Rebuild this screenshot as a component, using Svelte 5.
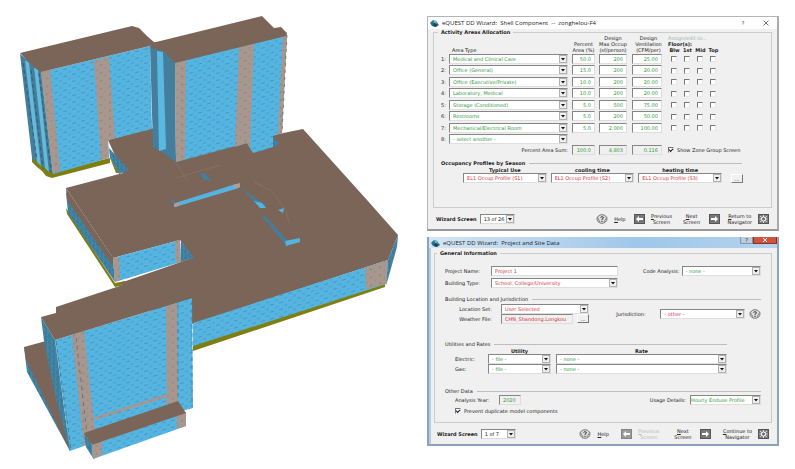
<script>
	const areas = [
		{ type: 'Medical and Clinical Care', percent: '50.0', occup: '200', vent: '25.00' },
		{ type: 'Office (General)', percent: '15.0', occup: '200', vent: '20.00' },
		{ type: 'Office (Executive/Private)', percent: '10.0', occup: '200', vent: '20.00' },
		{ type: 'Laboratory, Medical', percent: '10.0', occup: '200', vent: '20.00' },
		{ type: 'Storage (Conditioned)', percent: '5.0', occup: '500', vent: '75.00' },
		{ type: 'Restrooms', percent: '5.0', occup: '200', vent: '50.00' },
		{ type: 'Mechanical/Electrical Room', percent: '5.0', occup: '2,000', vent: '100.00' },
		{ type: '- select another -' }
	];

	const floors = ['Blw', '1st', 'Mid', 'Top'];

	const seasons = [
		{ id: 'typical', label: 'Typical Use', profile: 'EL1 Occup Profile (S1)' },
		{ id: 'cooling', label: 'cooling time', profile: 'EL1 Occup Profile (S2)' },
		{ id: 'heating', label: 'heating time', profile: 'EL1 Occup Profile (S3)' }
	];
</script>

{#snippet combo(id, value, tone = 'green', label = undefined)}
	<span class="combo">
		<select {id} class={tone} aria-label={label}>
			<option>{value}</option>
		</select>
		<svg viewBox="0 0 8 8" aria-hidden="true">
			<rect x="0.5" y="0.5" width="7" height="7" fill="#f0f0f0" stroke="#b0b0b0" />
			<path d="M2 3h4L4 5.500z" fill="#111" />
		</svg>
	</span>
{/snippet}

{#snippet appIcon()}
	<svg class="app-icon" viewBox="0 0 9 8" aria-hidden="true">
		<path d="M0 4 3 1l3 1 3 4-3 2-4-1z" fill="#2b6f86" />
		<path d="M3 1 6 2 7 5 4 4z" fill="#5fb9cf" />
		<path d="M4 4 7 5 6 8 3 7z" fill="#174654" />
	</svg>
{/snippet}

{#snippet helpIcon()}
	<svg class="help-icon" viewBox="0 0 12 10" aria-hidden="true">
		<ellipse cx="6" cy="5" rx="5" ry="4.300" fill="#ddd" stroke="#777" />
		<path d="M1 3 4 8M8 8l3-5" stroke="#888" fill="none" />
		<path d="M4.500 3.500Q6 1.800 7.400 3.300 7.600 4.500 6 5.300V6.200M6 7v1" stroke="#333" fill="none" />
	</svg>
{/snippet}

{#snippet arrowIcon(back)}
	<svg class="tool-icon" viewBox="0 0 11 10" aria-hidden="true">
		<rect x="0.500" y="0.500" width="10" height="9" fill="#777" stroke="#555" />
		{#if back}
			<path d="M2 5 5 2v2h4v2H5v2z" fill="#fff" />
		{:else}
			<path d="M9 5 6 2v2H2v2h4v2z" fill="#fff" />
		{/if}
	</svg>
{/snippet}

{#snippet navigatorIcon()}
	<svg class="tool-icon" viewBox="0 0 11 10" aria-hidden="true">
		<rect x="0.500" y="0.500" width="10" height="9" fill="#777" stroke="#555" />
		<path d="M2 2l7 6M9 2 2 8M5.500 1v8M1.500 5h8" stroke="#ddd" />
		<circle cx="5.500" cy="5" r="2" fill="#666" stroke="#fff" />
	</svg>
{/snippet}

{#snippet footer(id, screen, atStart, finish)}
	<footer>
		<label for={id}>Wizard Screen</label>
		<span class="screen">{@render combo(id, screen, 'dark')}</span>
		<button class="tool help">{@render helpIcon()}<span><u>H</u>elp</span></button>
		<button class="tool" disabled={atStart}>
			{@render arrowIcon(true)}<span><u>P</u>revious<br />Screen</span>
		</button>
		<button class="tool"><span><u>N</u>ext<br />Screen</span>{@render arrowIcon(false)}</button>
		<button class="tool">
			<span><u>{finish[0]}</u>{finish.slice(1)} to<br />Navigator</span>{@render navigatorIcon()}
		</button>
	</footer>
{/snippet}

<main>
	<svg class="model" viewBox="0 0 424 469" role="img" aria-label="3D building model">
		<defs>
			<pattern id="glass" width="9" height="7" patternUnits="userSpaceOnUse" patternTransform="skewY(-14)">
				<rect width="9" height="7" fill="#55b4e0" />
				<path d="M0 1.500h3M5 5h3" stroke="#3f8fb2" stroke-width="0.600" />
				<path d="M3 1v1" stroke="#44697a" stroke-width="0.600" />
			</pattern>
			<pattern id="shade" width="4" height="6" patternUnits="userSpaceOnUse" patternTransform="skewY(40)">
				<rect width="4" height="6" fill="#4487a7" />
				<path d="M0 1h3M1 4h2" stroke="#2f6683" stroke-width="0.800" />
			</pattern>
			<pattern id="panel" width="9" height="8" patternUnits="userSpaceOnUse" patternTransform="skewY(-14)">
				<rect width="9" height="8" fill="#a7978f" />
				<path d="M1 2h2M6 6h1" stroke="#71645f" stroke-width="0.600" />
			</pattern>
		</defs>

		<!-- podium -->
		<path class="base" d="M66 208 115 283 125 281V285L115 287 67 214z" />
		<path class="base" d="M193 345 385 283V287L193 351z" />
		<path class="roof" d="M108 140 152 128 176 155 303 129 367 200 398 235 388 260 193 324 150 310 123 283 193 258 180 240 113 258 66 188 123 173z" />
		<path fill="url(#shade)" d="M66 192 113 258 115 282 68 213z" />
		<path class="roof" d="M66 188 113 258V266L67 200z" />
		<path fill="url(#shade)" d="M109 148 129 170 119 174 110 158z" />
		<path fill="url(#glass)" d="M113 258 180 240 181 262 115 282z" />
		<path fill="url(#panel)" d="M113 258 119 257 120 280 115 282zM175 241 180 240 181 262 176 263z" />
		<path fill="url(#shade)" d="M181 241 194 258 181 262z" />
		<path class="roof" d="M120 283 193 258 210 290 193 324 150 300z" />
		<path fill="url(#glass)" d="M193 323 388 260 386 284 193 346z" />
		<path fill="url(#panel)" d="M365 268 388 260 386 284 366 289z" />
		<path fill="url(#shade)" d="M398 235 388 260 386 286 397 247z" />

		<!-- courtyard -->
		<path fill="#55b4df" d="M175 203 236 184 240 185 239 188 175 207z" />
		<path fill="#b39b96" d="M174 203h5v3l-5 1zM233 185l7-2v4l-6 1z" />
		<path class="shade" d="M240 186 251 195 266 205 263 209 255 203 252 199 249 196zM261 215 266 217 287 240 285 244zM168 197 175 202 174 205zM200 173 206 174 211 181 204 180z" />
		<path fill="#55b4df" d="M254 201 262 203 266 208 260 208zM285 241 300 238V242L286 246zM278 210 284 208 283 213z" />
		<path d="M175 162 187 180M176 178 220 165M254 182l18 9 14 20 3 12" fill="none" stroke="#8c776b" stroke-width="0.600" />

		<!-- west tower -->
		<path class="base" d="M32 156 52 172 110 158V163L52 178 46 176 42 171 37 167 32 162z" />
		<path class="base" d="M110 158 119 173 116 173z" />
		<path class="shade" d="M20 54 41 70 53 174 32 158z" />
		<path fill="#66b9db" d="M25 60 29 63 41 166 37 162zM34 67 38 70 49 172 45 168z" />
		<path d="M23 63 37 160M31 70 43 169M39 73 51 172" stroke="#2b5366" stroke-width="0.800" stroke-dasharray="4 3" />
		<path fill="url(#glass)" d="M41 72 150 46 152 129 108 140 109 158 53 174z" />
		<path fill="url(#panel)" d="M41 72 50 70 60 170 53 174zM94 61 109 57 115 138 108 140 109 158 101 160z" />
		<path class="roof" d="M20 53 132 26 139 28 147 36 155 43 150 46 41 72 35 68z" />

		<!-- east tower -->
		<path class="shade" d="M150 46 155 42 175 62 176 162 159 150 153 147z" />
		<path fill="#5bb9e1" d="M157 51 163 52 166 149 159 151z" />
		<path fill="url(#glass)" d="M175 62 287 34 282 133 273 136V147L253 153 247 143 176 162z" />
		<path fill="url(#panel)" d="M175 62 186 59 185 159 176 162zM239 47 254 43 250 148 247 143 235 147zM283 35 287 34 282 133 278 134z" />
		<path class="shade" d="M273 137 280 144 273 147z" />
		<path d="M287 35 282 133" stroke="#665a54" stroke-width="0.700" stroke-dasharray="3 4" />
		<path class="roof" d="M152 43 262 16 274 28 281 27 287 33 286 36 175 63 163 51 151 48z" />

		<!-- south tower -->
		<path fill="url(#shade)" d="M24 347 70 436V451L27 372z" />
		<path class="roof" d="M24 347 46 341 70 451 26 360z" />
		<path fill="url(#shade)" d="M41 317 55 340 70 451 55 395 44 341z" />
		<path fill="url(#glass)" d="M55 340 192 298 193 408 178 412 70 451z" />
		<path fill="url(#panel)" d="M72 335 84 331 95 432 84 446zM166 306 177 303 178 404 167 407zM95 417 167 394V397L95 420z" />
		<path d="M56 341 71 449M76 338 87 434M178 305V400M192 301v106" stroke="#456b7b" stroke-width="0.700" stroke-dasharray="4 4" />
		<path class="roof" d="M41 317 56 313V307L150 276 173 272 192 298 55 340z" />
		<path fill="url(#shade)" d="M84 433 92 445 93 458 86 447z" />
		<path fill="url(#glass)" d="M92 445 186 412V426L93 459z" />
		<path fill="url(#panel)" d="M92 445 102 441V455L93 459zM177 415 186 412V426L177 429z" />
		<path class="roof" d="M84 433 178 401 186 413 92 445z" />
	</svg>

	<div class="dialogs">
		<section class="dialog">
			<header>
				{@render appIcon()}
				<h2>eQUEST DD Wizard:&nbsp; Shell Component &nbsp;--&nbsp; zonghelou-F4</h2>
				<button aria-label="Help">?</button>
				<button aria-label="Close">
					<svg viewBox="0 0 6 6"><path d="M0.500 0.500l5 5M5.500 0.500l-5 5" stroke="#333" stroke-width="0.700" /></svg>
				</button>
			</header>

			<fieldset class="group allocation">
				<legend>Activity Areas Allocation</legend>
				<table>
					<colgroup>
						<col class="c-num" />
						<col />
						<col class="c-percent" />
						<col class="c-occup" />
						<col class="c-vent" />
						{#each floors as floor (floor)}
							<col class="c-floor" />
						{/each}
						<col class="c-rest" />
					</colgroup>
					<thead>
						<tr>
							<th rowspan="2"></th>
							<th rowspan="2" class="area">Area Type</th>
							<th rowspan="2">Percent<br />Area (%)</th>
							<th rowspan="2">Design<br />Max Occup<br />(sf/person)</th>
							<th rowspan="2">Design<br />Ventilation<br />(CFM/per)</th>
							<th colspan="5" class="floors"><i>Assign/edit to...</i><br /><b>Floor(s):</b></th>
						</tr>
						<tr>
							{#each floors as floor (floor)}
								<th><b>{floor}</b></th>
							{/each}
							<th></th>
						</tr>
					</thead>
					<tbody>
						{#each areas as area, i (area.type)}
							<tr>
								<td><label for="area-{i}">{i + 1}:</label></td>
								<td>{@render combo(`area-${i}`, area.type)}</td>
								{#if area.percent}
									<td><input value={area.percent} aria-label="Percent area" /></td>
									<td><input value={area.occup} aria-label="Design max occupancy" /></td>
									<td class="vent"><input value={area.vent} aria-label="Design ventilation" /></td>
									{#each floors as floor (floor)}
										<td class="tick"><input type="checkbox" aria-label={floor} /></td>
									{/each}
								{/if}
							</tr>
						{/each}
					</tbody>
					<tfoot>
						<tr>
							<td colspan="2" class="sum">Percent Area Sum:</td>
							<td><input readonly value="100.0" aria-label="Percent area sum" /></td>
							<td><input readonly value="4,803" aria-label="Total occupancy" /></td>
							<td class="vent"><input readonly value="0.116" aria-label="Total ventilation" /></td>
							<td colspan="5" class="zone">
								<label class="check"><input type="checkbox" checked />Show Zone Group Screen</label>
							</td>
						</tr>
					</tfoot>
				</table>

				<fieldset class="section">
					<legend>Occupancy Profiles by Season</legend>
					<div class="seasons">
						{#each seasons as season (season.id)}
							<div class="season">
								<label for={season.id}>{season.label}</label>
								{@render combo(season.id, season.profile, 'red')}
							</div>
						{/each}
						<button class="more" aria-label="More profiles">...</button>
					</div>
				</fieldset>
			</fieldset>

			{@render footer('screen-shell', '13 of 26', false, 'Return')}
		</section>

		<section class="dialog aero">
			<header>
				{@render appIcon()}
				<h2>eQUEST DD Wizard:&nbsp; Project and Site Data</h2>
				<div class="caption">
					<button aria-label="Help">?</button>
					<button class="close" aria-label="Close">
						<svg viewBox="0 0 6 6"><path d="M1 1l4 4M5 1l-4 4" stroke="#fff" /></svg>
					</button>
				</div>
			</header>

			<fieldset class="group general">
				<legend>General Information</legend>
				<div class="project">
					<label for="project-name">Project Name:</label>
					<input id="project-name" class="red" value="Project 1" />
					<label for="code" class="end">Code Analysis:</label>
					{@render combo('code', '- none -')}
					<label for="building">Building Type:</label>
					{@render combo('building', 'School, College/University', 'red')}
				</div>

				<fieldset class="section location">
					<legend>Building Location and Jurisdiction</legend>
					<div class="place">
						<label for="location" class="end">Location Set:</label>
						{@render combo('location', 'User Selected', 'red')}
						<div class="jurisdiction">
							<label for="jurisdiction">Jurisdiction:</label>
							{@render combo('jurisdiction', '- other -', 'red')}
							<button class="plain" aria-label="Jurisdiction help">{@render helpIcon()}</button>
						</div>
						<label for="weather" class="end">Weather File:</label>
						<div class="file">
							<input id="weather" class="red" readonly value="CHN_Shandong.Longkou" />
							<button class="more" aria-label="Browse weather files">...</button>
						</div>
					</div>
				</fieldset>

				<fieldset class="section utilities">
					<legend>Utilities and Rates</legend>
					<div class="rates">
						<span></span>
						<b>Utility</b>
						<b>Rate</b>
						<label for="electric">Electric:</label>
						{@render combo('electric', '- file -')}
						{@render combo('electric-rate', '- none -', 'green', 'Electric rate')}
						<label for="gas">Gas:</label>
						{@render combo('gas', '- file -')}
						{@render combo('gas-rate', '- none -', 'green', 'Gas rate')}
					</div>
				</fieldset>

				<fieldset class="section other">
					<legend>Other Data</legend>
					<div class="usage">
						<label for="year">Analysis Year:</label>
						<input id="year" readonly value="2020" />
						<label for="usage" class="end">Usage Details:</label>
						{@render combo('usage', 'Hourly Enduse Profile')}
					</div>
					<label class="check"><input type="checkbox" checked />Prevent duplicate model components</label>
				</fieldset>
			</fieldset>

			{@render footer('screen-project', '1 of 7', true, 'Continue')}
		</section>
	</div>
</main>

<style>
	:global(body) {
		margin: 0;
		background: #fff;
	}

	main {
		display: grid;
		grid-template-columns: minmax(0, 424fr) minmax(0, 352fr);
		column-gap: 3px;
		align-items: start;
		padding-right: 16px;
		font: 5px/6px 'DejaVu Sans', sans-serif;
		color: #222;
	}

	.model {
		width: 100%;
		height: auto;
		display: block;
	}

	.roof {
		fill: #7b6558;
	}

	.base {
		fill: #7f7e12;
	}

	.shade {
		fill: #437f9d;
	}

	.dialogs {
		display: flex;
		flex-direction: column;
		gap: 6px;
		padding-top: 16px;
	}

	.dialog {
		box-sizing: border-box;
		background: #f0f0f0;
		border: 1px solid #b4b4b4;
		border-right: 2px solid #aaa;
		border-bottom: 2px solid #999;
	}

	header {
		display: flex;
		align-items: center;
		gap: 3px;
		height: 12px;
		padding: 0 7px 0 2px;
		background: #fff;
	}

	h2 {
		flex: 1;
		margin: 0;
		font: 6px/8px 'Open Sans', sans-serif;
		white-space: nowrap;
	}

	button,
	input,
	select {
		box-sizing: border-box;
		margin: 0;
		font: inherit;
		color: inherit;
	}

	header button {
		width: 8px;
		padding: 0;
		border: 0;
		background: none;
	}

	header button + button {
		margin-left: 12px;
	}

	header button svg {
		display: block;
		width: 6px;
		height: 6px;
		margin: 0 auto;
	}

	.app-icon {
		width: 9px;
		height: 8px;
	}

	fieldset {
		min-width: 0;
		margin: 0;
		padding: 0;
		border: 0;
	}

	.group {
		margin: 0 5px;
		border: 1px solid #cbcbcb;
	}

	.group > legend {
		padding: 0 3px;
		font-weight: bold;
	}

	.section {
		border-top: 1px solid #bdbdbd;
	}

	.section > legend {
		padding: 0 4px 0 0;
		font-weight: bold;
	}

	table {
		width: 100%;
		height: 120px;
		table-layout: fixed;
		border-collapse: collapse;
	}

	.c-num {
		width: 8px;
	}

	.c-percent {
		width: 27px;
	}

	.c-occup {
		width: 32px;
	}

	.c-vent {
		width: 39px;
	}

	.c-floor {
		width: 13px;
	}

	.c-rest {
		width: 44px;
	}

	thead tr {
		height: 6px;
	}

	th {
		padding: 0;
		font-weight: normal;
		vertical-align: bottom;
		white-space: nowrap;
	}

	th.area {
		padding-left: 3px;
		text-align: left;
	}

	th.floors {
		text-align: left;
	}

	th i {
		font-style: normal;
		color: #9bb79b;
	}

	td {
		padding: 0 2px;
		vertical-align: middle;
	}

	td:first-child,
	td.tick {
		padding: 0;
	}

	td:nth-child(2) {
		padding: 0;
		padding-right: 2px;
	}

	tfoot td:nth-child(2) {
		padding: 0 2px;
	}

	td.vent {
		padding: 0 6px 0 3px;
	}

	tfoot .sum {
		padding-right: 2px;
		text-align: right;
	}

	tfoot .zone {
		padding: 0;
	}

	td.tick {
		text-align: center;
	}

	input,
	select {
		width: 100%;
		height: 10px;
		padding: 0 3px;
		border: 1px solid;
		border-color: #858585 #dedede #dedede #858585;
		border-radius: 0;
		background: #fff;
		color: #2f9a3c;
	}

	td input {
		display: block;
		text-align: right;
	}

	input[readonly] {
		background: #f0f0f0;
	}

	.combo {
		display: grid;
		min-width: 0;
	}

	.combo select,
	.combo svg {
		grid-area: 1 / 1;
	}

	.combo select {
		appearance: none;
		min-width: 0;
	}

	.combo svg {
		justify-self: end;
		align-self: center;
		width: 8px;
		height: 8px;
		margin-right: 1px;
		pointer-events: none;
	}

	input.red,
	select.red {
		color: #d4343b;
	}

	select.dark {
		color: #222;
	}

	input[type='checkbox'] {
		appearance: none;
		display: inline-block;
		flex: none;
		width: 6px;
		height: 6px;
		padding: 0;
		border-color: #777 #e8e8e8 #e8e8e8 #777;
		vertical-align: middle;
	}

	input[type='checkbox']:checked::after {
		content: '';
		display: block;
		width: 3px;
		height: 2px;
		border: solid #111;
		border-width: 0 0 1px 1px;
		transform: rotate(-45deg);
	}

	.check {
		display: flex;
		align-items: center;
		gap: 3px;
		white-space: nowrap;
	}

	.more {
		width: 12px;
		height: 9px;
		padding: 0;
		border: 1px solid;
		border-color: #fff #777 #777 #fff;
		background: #f0f0f0;
	}

	.allocation {
		padding: 0 7px 24px;
	}

	.allocation > legend {
		margin-left: -3px;
	}

	.allocation .section {
		margin: 5px 22px 0 0;
		padding-top: 1px;
	}

	.seasons {
		display: grid;
		grid-template-columns: repeat(3, minmax(0, 1fr)) 17px;
		column-gap: 4px;
		align-items: end;
		justify-items: stretch;
		margin-right: -1px;
		padding-left: 22px;
	}

	.seasons .more {
		justify-self: end;
	}

	.season {
		text-align: center;
		font-weight: bold;
	}

	.season select {
		font-weight: normal;
	}

	footer {
		display: flex;
		align-items: center;
		gap: 8px;
		height: 21px;
		padding: 0 8px;
		white-space: nowrap;
	}

	footer label {
		font-weight: bold;
		margin-right: -5px;
	}

	.screen {
		width: 35px;
	}

	.tool {
		display: flex;
		align-items: center;
		gap: 6px;
		padding: 0;
		border: 0;
		background: none;
	}

	.tool span {
		min-width: 22px;
	}

	.tool:disabled {
		color: #b8b8b8;
	}

	.tool:disabled svg {
		opacity: 0.7;
	}

	.help {
		margin-left: auto;
	}

	.help span {
		min-width: 0;
	}

	.help-icon {
		display: block;
		width: 12px;
		height: 10px;
	}

	.tool-icon {
		width: 11px;
		height: 10px;
	}

	/* second dialog has the blue window frame */
	.aero {
		border: 1px solid #8ba3bb;
		border-width: 0 2px 2px;
		background: #f0f0f0;
		box-shadow: inset 2px 0 #b9cde2;
	}

	.aero header {
		height: 11px;
		padding-right: 0;
		background: linear-gradient(90deg, #d5e5f4, #9fc7e9 60%, #b4d3ee);
	}

	.aero footer {
		gap: 12px;
	}

	.aero footer label {
		margin-right: -9px;
	}

	.caption {
		display: flex;
		align-self: flex-start;
	}

	.caption button {
		width: 13px;
		height: 7px;
		border: 1px solid #8197ab;
		border-top: 0;
		background: #b9cbdc;
		line-height: 5px;
	}

	.caption .close {
		width: 24px;
		margin: 0;
		border-color: #8d3027;
		background: #d4513c;
	}

	.general {
		margin-top: 2px;
		padding: 10px 10px 8px;
	}

	.general > legend {
		margin-left: -8px;
	}

	.general .section > legend {
		font-weight: normal;
	}

	.end {
		text-align: right;
	}

	.project {
		display: grid;
		grid-template-columns: 46px minmax(0, 8fr) minmax(0, 4fr) minmax(0, 5fr);
		row-gap: 2px;
		align-items: center;
	}

	.project .end {
		padding-right: 2px;
	}

	.location {
		margin-top: 8px;
	}

	.place {
		display: grid;
		grid-template-columns: 46px minmax(0, 88fr) minmax(0, 171fr);
		align-items: center;
		padding: 2px 0 0 10px;
	}

	.place > .end {
		padding-right: 9px;
	}

	.jurisdiction {
		display: grid;
		grid-template-columns: 40px minmax(0, 1fr) 12px;
		grid-column: 3;
		grid-row: 1 / 3;
		column-gap: 4px;
		align-items: center;
		padding-left: 27px;
	}

	.file {
		display: flex;
		gap: 4px;
	}

	.file input {
		flex: 1;
		min-width: 0;
	}

	.plain {
		padding: 0;
		border: 0;
		background: none;
	}

	.utilities {
		margin: 17px 34px 0 0;
	}

	.rates {
		display: grid;
		grid-template-columns: 28px minmax(0, 63fr) minmax(0, 171fr);
		column-gap: 5px;
		align-items: center;
		padding: 1px 0 0 10px;
	}

	.rates b {
		text-align: center;
	}

	.other {
		margin-top: 14px;
	}

	.usage {
		display: grid;
		grid-template-columns: 44px 22px 1fr 71px;
		align-items: center;
		padding: 1px 0 3px 10px;
	}

	.usage .end {
		padding-right: 4px;
	}

	.usage select {
		padding: 0;
	}

	.other .check {
		padding-left: 10px;
	}
</style>
